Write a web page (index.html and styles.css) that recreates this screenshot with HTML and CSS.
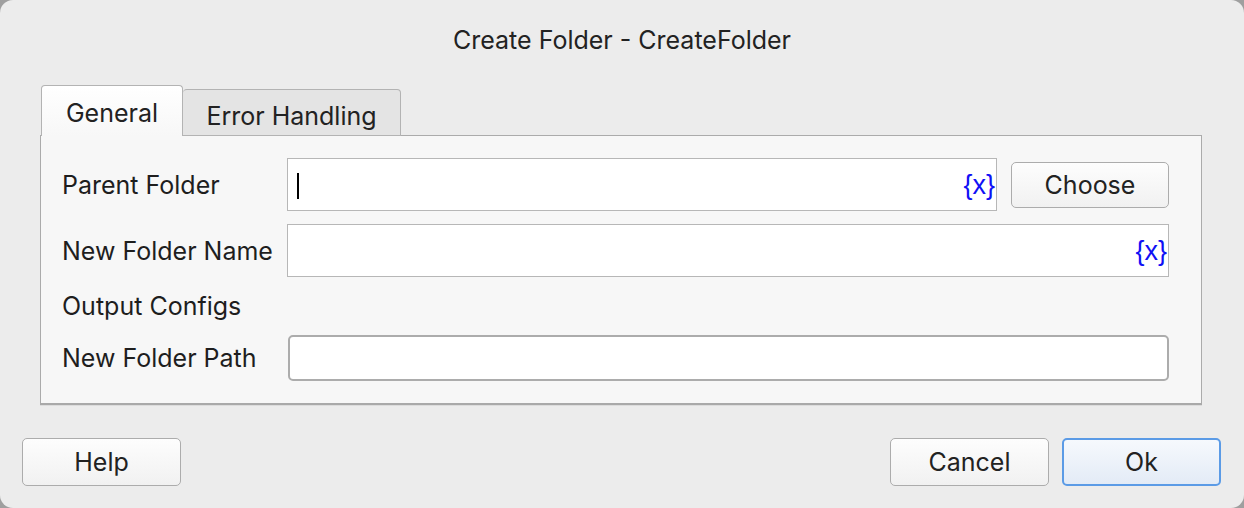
FILE: index.html
```html
<!DOCTYPE html>
<html>
<head>
<meta charset="utf-8">
<link rel="stylesheet" href="styles.css">
</head>
<body>
<div class="window">
  <div class="title">Create Folder - CreateFolder</div>
  <div class="tabs">
    <div class="tab active">General</div>
    <div class="tab">Error Handling</div>
  </div>
  <div class="panel">
    <div class="label">Parent Folder</div>
    <div class="field-row">
      <div class="input"><span class="caret"></span><span class="var">{x}</span></div>
      <div class="btn choose">Choose</div>
    </div>
    <div class="label">New Folder Name</div>
    <div class="input"><span class="var">{x}</span></div>
    <div class="label">Output Configs</div>
    <div></div>
    <div class="label">New Folder Path</div>
    <div class="input rounded"></div>
  </div>
  <div class="footer">
    <div class="btn">Help</div>
    <div class="spacer"></div>
    <div class="btn">Cancel</div>
    <div class="btn default">Ok</div>
  </div>
</div>
</body>
</html>
```

FILE: styles.css
```css
html, body {
  margin: 0;
  padding: 0;
  background: #9f9f9f;
}
body {
  width: 1244px;
  height: 508px;
  overflow: hidden;
  font-family: "Inter", "Liberation Sans", sans-serif;
  color: #222;
}
.window {
  box-sizing: border-box;
  width: 1244px;
  height: 508px;
  background: #ececec;
  border-radius: 13px;
  display: flex;
  flex-direction: column;
}
.title {
  height: 85px;
  box-sizing: border-box;
  padding-top: 25px;
  text-align: center;
  font-size: 25px;
  line-height: 30px;
  color: #222;
}
.tabs {
  display: flex;
  align-items: flex-end;
  margin-left: 41px;
  position: relative;
  z-index: 2;
  height: 51px;
}
.tab {
  box-sizing: border-box;
  border: 1px solid #b3b3b3;
  border-bottom: none;
  border-radius: 4px 4px 0 0;
  font-size: 25px;
  color: #222;
  text-align: center;
}
.tab.active {
  width: 142px;
  height: 51px;
  background: linear-gradient(#ffffff, #f7f7f7);
  line-height: 54px;
}
.tab:not(.active) {
  width: 218px;
  height: 47px;
  background: #e4e4e4;
  border-left: none;
  line-height: 52px;
  border-bottom: 1px solid #b3b3b3;
}
.panel {
  margin: -1px 42px 0 40px;
  height: 270px;
  box-sizing: border-box;
  background: #f7f7f7;
  border: 1px solid #ababab;
  border-bottom: 2px solid #a9a9a9;
  box-shadow: 0 1px 0 #dcdcdc;
  padding: 22px 32px 0 21px;
  display: grid;
  grid-template-columns: 225px 1fr;
  grid-template-rows: 53px 53px 32px 46px;
  row-gap: 13px;
  align-items: center;
}
.label {
  font-size: 25px;
  color: #1e1e1e;
  line-height: 30px;
}
.field-row {
  display: flex;
  align-items: center;
  gap: 14px;
  height: 53px;
}
.input {
  box-sizing: border-box;
  height: 53px;
  background: #fff;
  border: 1px solid #b7b7b7;
  position: relative;
  display: flex;
  align-items: center;
  justify-content: flex-end;
}
.field-row .input {
  flex: 1;
}
.input.rounded {
  height: 46px;
  border: 2px solid #acacac;
  border-radius: 5px;
  margin-left: 1px;
}
.caret {
  position: absolute;
  left: 9px;
  top: 14px;
  width: 2px;
  height: 26px;
  background: #000;
}
.var {
  font-family: "Liberation Sans", sans-serif;
  color: #1010f5;
  font-size: 27px;
  padding-right: 1px;
  line-height: 30px;
}
.btn {
  box-sizing: border-box;
  width: 159px;
  height: 48px;
  border: 1.5px solid #acacac;
  border-radius: 5px;
  background: linear-gradient(#fdfdfd, #f1f1f1);
  font-size: 25px;
  color: #222;
  display: flex;
  align-items: center;
  justify-content: center;
}
.btn.choose {
  width: 158px;
  height: 46px;
}
.footer {
  display: flex;
  align-items: center;
  padding: 0 23px 0 22px;
  margin-top: 33px;
  gap: 13px;
}
.spacer {
  flex: 1;
}
.btn.default {
  border: 2px solid #5b9be6;
  background: linear-gradient(#f6f9fd, #e3ebf6);
}
```
